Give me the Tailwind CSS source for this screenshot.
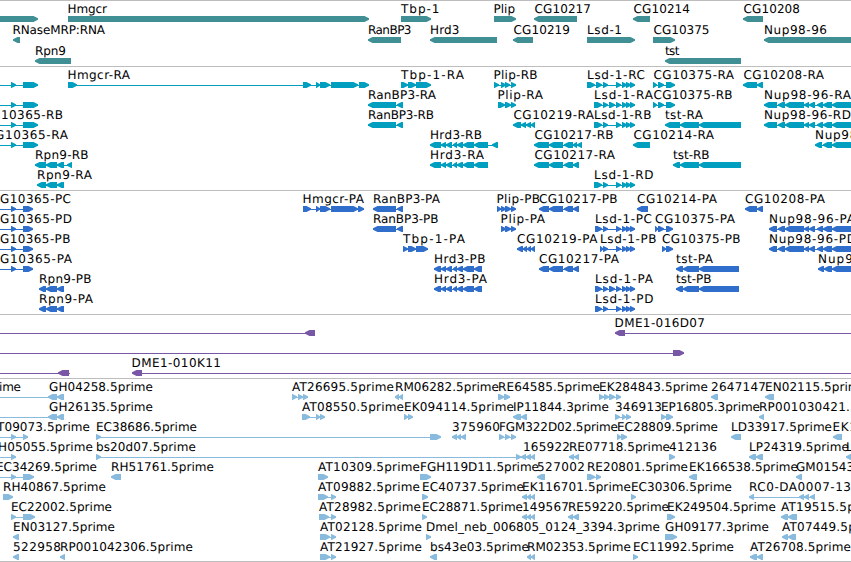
<!DOCTYPE html>
<html lang="en">
<head>
<meta charset="utf-8">
<title>Genome tracks</title>
<script src="https://cdn.jsdelivr.net/npm/@tailwindcss/browser@4"></script>
</head>
<body class="bg-white">
<main class="flex h-[562px] w-[851px] flex-col overflow-hidden border-b border-[#bdbdbd] font-['DejaVu_Sans',sans-serif] text-[12px] text-black [text-rendering:geometricPrecision]">
  <section class="h-[66px] border-t border-[#bdbdbd] text-[#3f8f95]"><svg class="block h-[65px] w-full" viewBox="0 1 851 65" data-track="genes"></svg></section>
  <section class="h-[124px] border-t border-[#bdbdbd] text-[#009fbf]"><svg class="block h-[123px] w-full" viewBox="0 67 851 123" data-track="transcripts"></svg></section>
  <section class="h-[124px] border-t border-[#bdbdbd] text-[#306ecc]"><svg class="block h-[123px] w-full" viewBox="0 191 851 123" data-track="proteins"></svg></section>
  <section class="h-[64px] border-t border-[#bdbdbd] text-[#7858a6]"><svg class="block h-[63px] w-full" viewBox="0 315 851 63" data-track="clones"></svg></section>
  <section class="h-[183px] border-t border-[#bdbdbd] text-[#88bbdd]"><svg class="block h-[182px] w-full" viewBox="0 379 851 182" data-track="ests"></svg></section>
</main>
<script>
// One feature per line: row, strand, blocks, then optional label, label start, label end.
// A block written with "~" only extends the connecting line.
const LSD = '616-621,622-627,626-631,630-635';
const NUP = '778-785,785-804,804-809,809-815,817-823,823-832,832-860';
const HRD = '441-446,446-452,453-457,457-463,463-474';
const tracks = {
genes: { base: 13, step: 21, data: `
0 > -10-38
0 > 68-369 Hmgcr 67.5 107
0 > 401-431 Tbp-1 401 439.5
0 > 494-516 Plip 493.5 515
0 < 534-577 CG10217 534.5 591
0 < 633-650 CG10214 633.5 690
0 < 743-763 CG10208 743.5 800
1 < 13-20 RNaseMRP:RNA 12.5 105
1 < 368-401 RanBP3 368 411.5
1 < 430-497 Hrd3 430 459.5
1 < 513-533 CG10219 513.5 570
1 > 587-635 Lsd-1 587 622
1 > 653-675 CG10375 653.5 709.5
1 < 764-860 Nup98-96 764 827
2 < 35-71 Rpn9 35 66
2 < 665-741 tst 665 679.5` },
transcripts: { base: 79, step: 20, data: `
0 > -9~0,11-16,23-38
0 > 68-77,303-311,316-320,320-330,331-358,359-369 Hmgcr-RA 67.5 130
0 > 401-408,408-416,416-431 Tbp-1-RA 401 464
0 > 494-499,501-506,505-510,511-516 Plip-RB 493.5 537.5
0 > 587-595,596-602,603-608,${LSD} Lsd-1-RC 587 645
0 > 653-657,658-664,666-675 CG10375-RA 653.5 734
0 < 743-757,757-763 CG10208-RA 743.5 824
1 > -9~0,11-16,23-38
1 < 368-396,397-403 RanBP3-RA 368 436
1 > 498-505,505-511,511-516 Plip-RA 497.5 543
1 > 594-602,603-608,609-615,${LSD} Lsd-1-RA 594 653
1 > 653-657,658-664,666-675 CG10375-RB 653.5 732.5
1 < 764-777,${NUP} Nup98-96-RA 764 851
2 > -9~0,11-16,23-38 10365-RB 1 63
2 < 368-396,397-403 RanBP3-RB 368 434
2 < 513-521,521-526,526-531,531-535 CG10219-RA 513.5 594
2 > 594-602,603-608,${LSD} Lsd-1-RB 594 651.5
2 < 665-680,680-699,699-741 tst-RA 665 703
2 < 764-777,${NUP} Nup98-96-RD 764 851
3 > -9~0,11-16,23-38 G10365-RA -5 68
3 < 430-441,${HRD},474-488,492-498 Hrd3-RB 430 482
3 < 534-549,549-563,564-573,573-577,577-582 CG10217-RB 534.5 613.5
3 < 633-650 CG10214-RA 633.5 714
3 < 815-822,823-832,832-860 Nup98-96-RB 815 902
4 < 35-46,46-57,57-64,67-72 Rpn9-RB 35 88.5
4 < 430-441,${HRD},474-488 Hrd3-RA 430 484
4 < 534-549,549-563,564-573,573-579 CG10217-RA 534.5 615
4 < 673-680,680-699,699-741 tst-RB 673 709.5
5 < 37-46,46-57,57-64 Rpn9-RA 37 92
5 > 594-602,603-608,${LSD} Lsd-1-RD 594 653.5` },
proteins: { base: 203, step: 20, data: `
0 > -9~0,11-16,23-33 G10365-PC 0 71
0 > 303-311,316-320,320-330,331-358,358-364 Hmgcr-PA 302.5 364
0 < 373-396,397-403 RanBP3-PA 373 440
0 > 497-501,501-506,505-511,511-516 Plip-PB 496.5 540
0 < 539-549,549-563,564-573,573-579 CG10217-PB 539 617.5
0 < 637-648 CG10214-PA 637 717
0 < 745-757,757-763 CG10208-PA 745 825
1 > -9~0,11-16,23-33 G10365-PD 0 72
1 < 373-396,397-403 RanBP3-PB 373 438.5
1 > 501-506,505-511,511-516 Plip-PA 500.5 545
1 > 595-602,603-608,${LSD} Lsd-1-PC 595 652
1 > 655-658,658-664,666-673 CG10375-PA 655 735
1 < 769-777,${NUP} Nup98-96-PA 769 855
2 > -9~0,11-16,23-33 G10365-PB 0 70.5
2 > 403-408,408-416,416-428 Tbp-1-PA 403 465
2 < 517-523,523-527,527-531,531-535 CG10219-PA 517 597.5
2 > 600-603,603-608,${LSD} Lsd-1-PB 600 656.5
2 > 662-666,666-673 CG10375-PB 662 740.5
2 < 769-777,${NUP} Nup98-96-PD 769 856
3 > -9~0,11-16,23-33 G10365-PA 0 72
3 < 434-441,${HRD},474-482 Hrd3-PB 434 485.5
3 < 539-549,549-563,564-573,573-579 CG10217-PA 539 619
3 < 676-683,683-699,699-739 tst-PA 676 713
3 < 818-824,824-832,832-860 Nup98-96-PB 818 907
4 < 39-46,46-57,57-64 Rpn9-PB 39 91.5
4 < 434-441,${HRD},474-482 Hrd3-PA 434 487
4 > 595-602,603-608,609-615,${LSD} Lsd-1-PA 595 653
4 < 676-683,683-699,699-739 tst-PB 676 711.5
5 < 39-46,46-57,57-64 Rpn9-PA 39 93
5 > 595-602,603-608,${LSD} Lsd-1-PD 595 653.5` },
clones: { base: 327, step: 20, data: `
0 < -9~0,305-315
0 < 615-625,851~860 DME1-016D07 614.5 705
1 > -9~0,673-684
2 < -9~0,58-69,69~70
2 < 132-142,851~860 DME1-010K11 131.5 221` },
ests: { base: 391, step: 20, data: `
0 < -9~0,48-57,57-64 ime -1 21
0 < 48~48 GH04258.5prime 49 153
0 > 292-297,298-303,303-308 AT26695.5prime 292 394
0 < 395-399,399-403 RM06282.5prime 395 499
0 > 498-504,504-510 RE64585.5prime 498 600
0 > 599-604,604-609,609-615,616-621 EK284843.5prime 599 708
0 < 711-718 2647147 711 766
0 < 765-774 EN02115.5prime 765 867
1 < -9~0,48-57,57-64 GH26135.5prime 49 153
1 > 302-310,316-320,320-325 AT08550.5prime 302 404
1 > 404-408,408-413 EK094114.5prime 404 514
1 < 513-521,521-527 IP11844.3prime 513 609
1 > 615-620,622-626,626-631 346913 615 662
1 > 661-666,666-673 EP16805.3prime 661 760
1 < 759-764 RP001030421.5prime 759 894
2 > -9~0,11-16,23-28 T09073.5prime -3 90
2 > 96-101,430-441 EC38686.5prime 96 197
2 < 452-457,457-461,461-466 375960 452 500
2 > 499-504,505-510,511-516 FGM322D02.5prime 499 618
2 > 617-621,621-627 EC28809.5prime 617 718
2 < 731-741 LD33917.5prime 731 832
2 < 833-842 EK1 832.5 857
3 > -9~0,11-16 H05055.5prime -2 93
3 > 96-101,516-521 bs20d07.5prime 96 196
3 < 521-526,526-531,531-535 165922 523 570
3 < 569-574,574-579 RE07718.5prime 569 670
3 > 669-675 412136 669 717
3 < 749-756,756-763 LP24319.5prime 749 849
3 < 846-860 L 846 853
4 > -9~0,11-16,23-34 EC34269.5prime -4 97
4 < 111-121 RH51761.5prime 111 214
4 > 318-328 AT10309.5prime 318 420
4 > 420-431 FGH119D11.5prime 420 539
4 < 537-545 527002 537 585
4 > 587-595,596-601 RE20801.5prime 587 688
4 < 689-697 EK166538.5prime 689 798
4 < 796-802 GM01543.5prime 796 901
5 > 3-13 RH40867.5prime 3 106
5 > 318-328,331-336 AT09882.5prime 318 420
5 > 422-428 EC40737.5prime 422 524
5 < 522-527,527-531,531-535 EK116701.5prime 522 631
5 > 631-636 EC30306.5prime 631 732
5 < 749-754,799-804,804-809,810-815 RC0-DA0007-13 749 851
6 > 11-16,23-35 EC22002.5prime 11 112
6 > 319-329,331-336 AT28982.5prime 319 421
6 > 422-427 EC28871.5prime 422 523
6 < 522-527,527-531,531-535 149567 522 569
6 < 568-573,573-579 RE59220.5prime 568 669
6 > 667-675 EK249504.5prime 667 776
6 < 781-788,788-797 AT19515.5prime 781 883
7 < 13-19 EN03127.5prime 13 115
7 > 320-330,331-336 AT02128.5prime 320 422
7 > 426-431 Dmel_neb_006805_0124_3394.3prime 426 660
7 > 665-677 GH09177.3prime 665 769
7 < 782-788,788-796 AT07449.5prime 782 884
8 < 13-19 522958 13 61
8 < 60-65 RP001042306.5prime 60 193
8 > 320-330,331-336 AT21927.5prime 320 422
8 < 430-437 bs43e03.5prime 430 529
8 < 527-531,531-535 RM02353.5prime 527 631
8 > 633-638 EC11992.5prime 633 734
8 < 750-757,757-763 AT26708.5prime 750 851` }
};

function block(a, b, strand, y) {
  const h = Math.min(5, b - a);
  return strand === '>'
    ? `<path d="M${a} ${y}H${b - h + 0.5}L${b} ${y + 2.3}V${y + 3.7}L${b - h + 0.5} ${y + 6}H${a}Z"/>`
    : `<path d="M${b} ${y}H${a + h - 0.5}L${a} ${y + 2.3}V${y + 3.7}L${a + h - 0.5} ${y + 6}H${b}Z"/>`;
}

for (const [name, { base, step, data }] of Object.entries(tracks)) {
  let shapes = '', labels = '';
  for (const line of data.trim().split('\n')) {
    const [row, strand, spec, label, x0, x1] = line.split(' ');
    const baseline = base + row * step, y = baseline + 3;
    const parts = spec.split(',').map(p => {
      const m = p.match(/^(-?\d+)([-~])(\d+)$/);
      return { a: +m[1], b: +m[3], solid: m[2] === '-' };
    });
    const start = parts[0].a, end = parts[parts.length - 1].b;
    if (parts.length > 1) shapes += `<rect x="${start}" y="${y + 3}" width="${end - start}" height="1"/>`;
    shapes += parts.filter(p => p.solid).map(p => block(p.a, p.b, strand, y)).join('');
    if (label) labels += `<text x="${x0}" y="${baseline}" textLength="${x1 - x0}">${label}</text>`;
  }
  document.querySelector(`[data-track="${name}"]`).innerHTML =
    `<g fill="currentColor">${shapes}</g><g fill="#000">${labels}</g>`;
}
</script>
</body>
</html>
